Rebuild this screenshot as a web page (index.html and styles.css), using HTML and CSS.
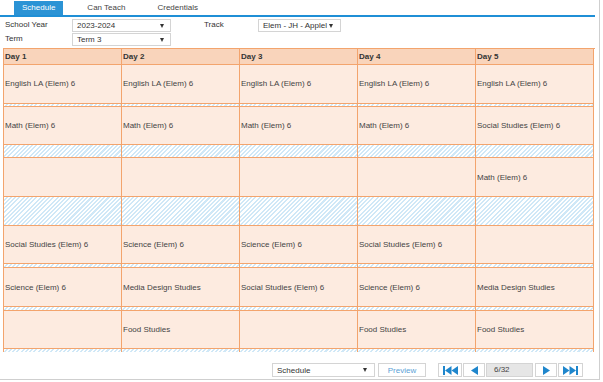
FILE: index.html
```html
<!DOCTYPE html>
<html lang="en">
  <head>
    <meta charset="UTF-8" />
    <title>Schedule</title>
    <link rel="stylesheet" href="styles.css">
  </head>
  <body>
    <div class="frame">
      <!-- tabs -->
      <div class="tabs">
        <span class="tab active">Schedule</span>
        <span class="tab">Can Teach</span>
        <span class="tab">Credentials</span>
      </div>

      <!-- filters -->
      <div class="filters">
        <span class="label">School Year</span>
        <div class="select"><span class="value">2023-2024</span><i class="caret"></i></div>
        <span class="label track-label">Track</span>
        <div class="select track"><span class="value">Elem - JH - Applel</span><i class="caret"></i></div>
        <span class="label">Term</span>
        <div class="select"><span class="value">Term 3</span><i class="caret"></i></div>
      </div>

      <!-- timetable -->
      <div class="timetable">
        <div class="row head">
          <div class="cell">Day 1</div>
          <div class="cell">Day 2</div>
          <div class="cell">Day 3</div>
          <div class="cell">Day 4</div>
          <div class="cell">Day 5</div>
        </div>
        <div class="row period first">
          <div class="cell">English LA (Elem) 6</div>
          <div class="cell">English LA (Elem) 6</div>
          <div class="cell">English LA (Elem) 6</div>
          <div class="cell">English LA (Elem) 6</div>
          <div class="cell">English LA (Elem) 6</div>
        </div>
        <div class="row gap gap-2">
          <div class="cell"></div><div class="cell"></div><div class="cell"></div><div class="cell"></div><div class="cell"></div>
        </div>
        <div class="row period short">
          <div class="cell">Math (Elem) 6</div>
          <div class="cell">Math (Elem) 6</div>
          <div class="cell">Math (Elem) 6</div>
          <div class="cell">Math (Elem) 6</div>
          <div class="cell">Social Studies (Elem) 6</div>
        </div>
        <div class="row gap gap-12">
          <div class="cell"></div><div class="cell"></div><div class="cell"></div><div class="cell"></div><div class="cell"></div>
        </div>
        <div class="row period">
          <div class="cell"></div>
          <div class="cell"></div>
          <div class="cell"></div>
          <div class="cell"></div>
          <div class="cell">Math (Elem) 6</div>
        </div>
        <div class="row gap gap-28">
          <div class="cell"></div><div class="cell"></div><div class="cell"></div><div class="cell"></div><div class="cell"></div>
        </div>
        <div class="row period short">
          <div class="cell">Social Studies (Elem) 6</div>
          <div class="cell">Science (Elem) 6</div>
          <div class="cell">Science (Elem) 6</div>
          <div class="cell">Social Studies (Elem) 6</div>
          <div class="cell"></div>
        </div>
        <div class="row gap gap-3">
          <div class="cell"></div><div class="cell"></div><div class="cell"></div><div class="cell"></div><div class="cell"></div>
        </div>
        <div class="row period">
          <div class="cell">Science (Elem) 6</div>
          <div class="cell">Media Design Studies</div>
          <div class="cell">Social Studies (Elem) 6</div>
          <div class="cell">Science (Elem) 6</div>
          <div class="cell">Media Design Studies</div>
        </div>
        <div class="row gap gap-3">
          <div class="cell"></div><div class="cell"></div><div class="cell"></div><div class="cell"></div><div class="cell"></div>
        </div>
        <div class="row period short">
          <div class="cell"></div>
          <div class="cell">Food Studies</div>
          <div class="cell"></div>
          <div class="cell">Food Studies</div>
          <div class="cell">Food Studies</div>
        </div>
        <div class="row gap gap-3 last">
          <div class="cell"></div><div class="cell"></div><div class="cell"></div><div class="cell"></div><div class="cell"></div>
        </div>
      </div>

      <!-- pager -->
      <div class="pager">
        <div class="select report"><span class="value">Schedule</span><i class="caret"></i></div>
        <button class="btn preview">Preview</button>
        <button class="btn nav first-page">
          <svg width="15" height="9" viewBox="0 0 15 9"><rect x="0" y="0" width="2" height="9" fill="#1f86cc"/><polygon points="2,4.5 8.5,0 8.5,9" fill="#1f86cc"/><polygon points="8.5,4.5 15,0 15,9" fill="#1f86cc"/></svg>
        </button>
        <button class="btn nav prev">
          <svg width="7" height="9" viewBox="0 0 7 9"><polygon points="0,4.5 7,0 7,9" fill="#1f86cc"/></svg>
        </button>
        <div class="page-box">6/32</div>
        <button class="btn nav next">
          <svg width="7" height="9" viewBox="0 0 7 9"><polygon points="7,4.5 0,0 0,9" fill="#1f86cc"/></svg>
        </button>
        <button class="btn nav last-page">
          <svg width="15" height="9" viewBox="0 0 15 9"><polygon points="6.5,4.5 0,0 0,9" fill="#1f86cc"/><polygon points="13,4.5 6.5,0 6.5,9" fill="#1f86cc"/><rect x="13" y="0" width="2" height="9" fill="#1f86cc"/></svg>
        </button>
      </div>
    </div>
  </body>
</html>
```

FILE: styles.css
```css
body {
  margin: 0;
  font-family: "Liberation Sans", Arial, sans-serif;
  font-size: 8px;
  color: #333;
  background: #fff;
}
.frame {
  width: 599px;
  height: 379px;
  border-right: 1px solid #cfcfcf;
  border-bottom: 1px solid #cfcfcf;
  display: flex;
  flex-direction: column;
}

/* tabs */
.tabs {
  display: flex;
  gap: 16px;
  padding-left: 14px;
  padding-top: 1px;
  width: 581px;
  border-bottom: 2px solid #1f8fd6;
}
.tab {
  height: 14px;
  line-height: 14px;
  padding: 0 8px;
  color: #444;
}
.tab.active {
  background: #2b93d5;
  color: #fff;
}

/* filters */
.filters {
  display: grid;
  grid-template-columns: 67px 99px 33px 54px 83px;
  grid-template-rows: 13px 13px;
  row-gap: 1px;
  padding: 2px 0 0 5px;
  margin-bottom: 2px;
}
.label {
  line-height: 11px;
}
.track-label {
  grid-column: 4;
}
.select {
  box-sizing: border-box;
  height: 13px;
  border: 1px solid #d4d4d4;
  background: #fff;
  display: flex;
  align-items: center;
  justify-content: space-between;
  padding: 0 6px 0 4px;
  color: #333;
}
.select .value {
  white-space: nowrap;
}
.select.track {
  padding-right: 7px;
}
.caret {
  width: 0;
  height: 0;
  border-left: 2.5px solid transparent;
  border-right: 2.5px solid transparent;
  border-top: 4px solid #333;
  flex-shrink: 0;
}

/* timetable */
.timetable {
  margin-left: 3px;
  width: 591px;
  border-left: 1px solid #f3a46d;
  border-top: 1px solid #f3a46d;
}
.row {
  display: grid;
  grid-template-columns: repeat(5, 118px);
}
.cell {
  border-right: 1px solid #f3a46d;
  padding: 0 1px;
  display: flex;
  align-items: center;
  white-space: nowrap;
  color: #444;
}
.head .cell {
  height: 15px;
  background: #f9d4bb;
  font-weight: bold;
  color: #333;
  border-bottom: 1px solid #f3a46d;
}
.period .cell {
  height: 38px;
  background: #fdebe0;
  border-top: 1px solid #f3a46d;
  border-bottom: 1px solid #f3a46d;
}
.period.short .cell {
  height: 37px;
}
.period.first .cell {
  border-top: none;
  padding-bottom: 2px;
  height: 36px;
}
.gap .cell {
  background: repeating-linear-gradient(135deg, #fff 0 1.5px, #d0e8f7 1.5px 3px);
}
.gap-2 .cell { height: 2px; }
.gap-3 .cell { height: 3px; }
.gap-12 .cell { height: 12px; }
.gap-28 .cell { height: 28px; }

/* pager */
.pager {
  display: flex;
  align-items: center;
  padding-left: 272px;
  margin-top: 11px;
}
.select.report {
  width: 103px;
  height: 14px;
  padding-right: 7px;
}
.btn {
  box-sizing: border-box;
  height: 14px;
  border: 1px solid #d4d4d4;
  background: #fff;
  padding: 0;
  font-family: inherit;
  font-size: 8px;
  display: flex;
  align-items: center;
  justify-content: center;
}
.preview {
  width: 48px;
  margin-left: 3px;
  color: #5b9fd6;
}
.nav {
  width: 22px;
  margin-left: 1px;
}
.first-page {
  width: 24px;
  margin-left: 12px;
}
.last-page {
  width: 25px;
}
.page-box {
  box-sizing: border-box;
  width: 47px;
  height: 14px;
  margin-left: 1px;
  border: 1px solid #d4d4d4;
  background: #e6e6e6;
  padding-left: 7px;
  line-height: 12px;
  color: #444;
}
.next {
  margin-left: 2px;
}
```
